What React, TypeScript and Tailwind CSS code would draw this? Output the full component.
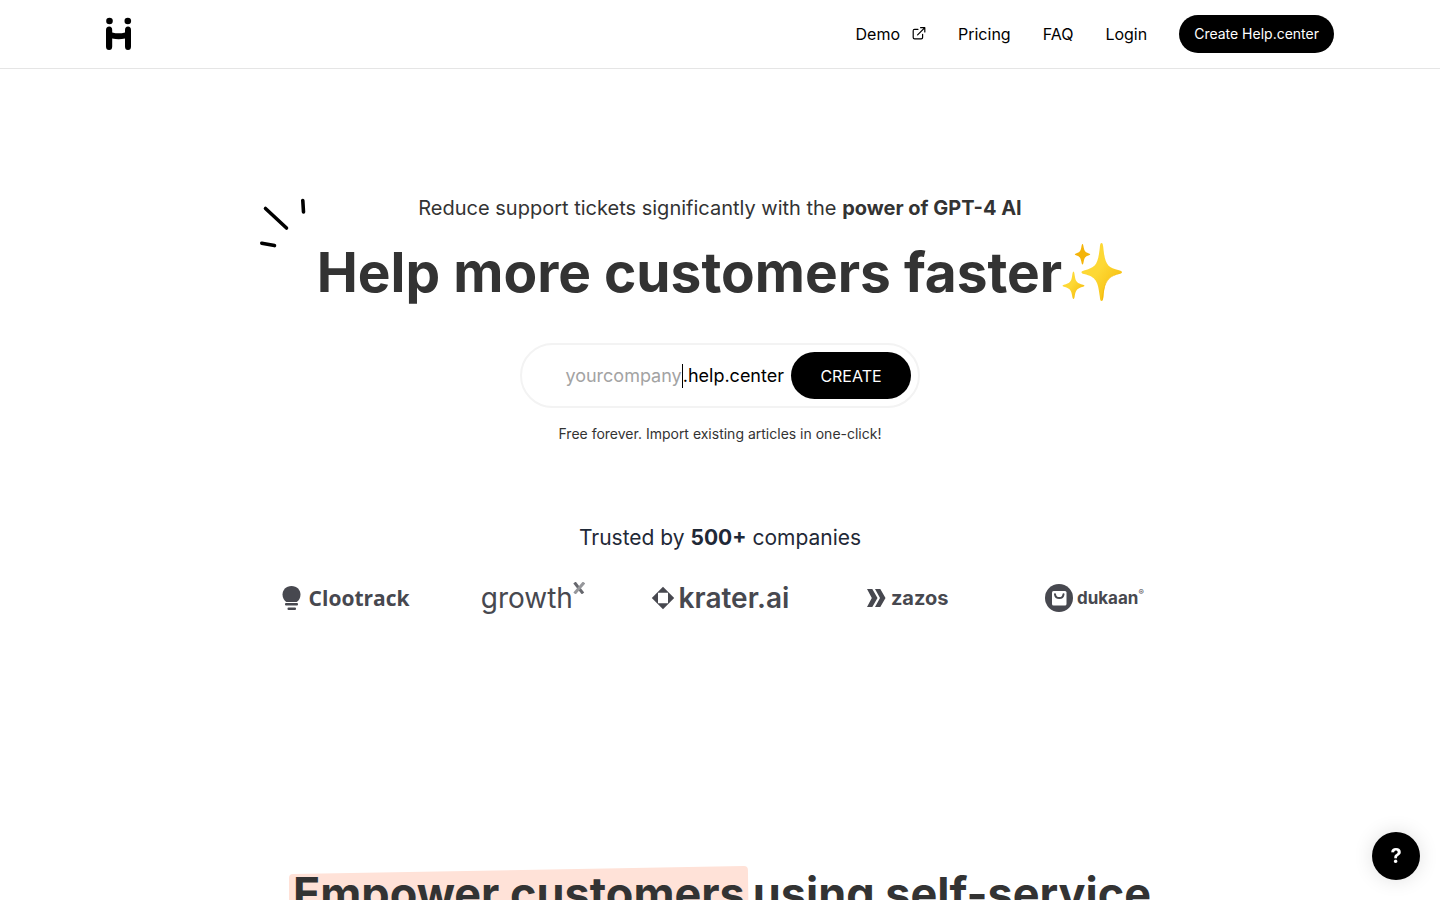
function HelpLogo() {
  return (
    <svg viewBox="0 0 26 34" className="h-[34px] w-[26px]" aria-hidden="true">
      <circle cx="3.5" cy="4" r="3.3" />
      <circle cx="21.8" cy="4" r="3.3" />
      <path d="M0 13Q0 9.5 3.3 9.5Q6.2 9.5 6.2 13V15.4Q12.8 17.2 19 15.4V13Q19 9.5 22 9.5Q25 9.5 25 13V29.5Q25 33 22 33Q19 33 19 29.5V21.4Q12.8 23 6.2 21.4V29.5Q6.2 33 3.1 33Q0 33 0 29.5Z" />
    </svg>
  );
}

function ExternalIcon() {
  return (
    <svg viewBox="0 0 14 14" className="h-[14px] w-[14px]" fill="none" stroke="currentColor" strokeWidth="1.2" strokeLinecap="round" strokeLinejoin="round" aria-hidden="true">
      <path d="M6 2.3H2.6Q1.2 2.3 1.2 3.7V10.5Q1.2 11.9 2.6 11.9H9.2Q10.6 11.9 10.6 10.5V7.3M8.6 .7H12.8V4.9M12.6 .9L5.6 7.9" />
    </svg>
  );
}

function Sparkles() {
  return (
    <svg viewBox="3 0 61 64" className="h-16 w-[61px]" aria-hidden="true">
      <defs>
        <linearGradient id="gold" x1="0" y1="0" x2="1" y2="1">
          <stop offset="0.45" stopColor="#fdd835" />
          <stop offset="1" stopColor="#f4b400" />
        </linearGradient>
      </defs>
      <path fill="url(#gold)" d="M42.5 3C43.7 3 44 5 44.3 7.5C46 24 48 27.5 60 30.3C62.4 30.9 63 31.5 63 32.2C63 33 62 33.4 60 34C48 37 46 41 44.3 56.5C44 59 43.6 61 42.5 61C41.4 61 41 59 40.8 56.5C39 41 37 37 25 34C23 33.4 22.5 33 22.5 32.2C22.5 31.4 23 31 25 30.4C37 27.5 39 24 40.8 7.5C41 5 41.4 3 42.5 3Z" />
      <path fill="#f4b400" d="M62 33.2C50 36 44.8 39 43 60.8C44.2 60 44.3 58 44.5 56C46 42 49 37 60 34Z" opacity="0.8" />
      <path fill="url(#gold)" d="M14.5 31.5C15.3 31.5 15.5 34 15.8 36C16.6 42 18.5 43.3 24 44.7C26 45.2 26 46.2 24 46.7C18.5 48 16.6 50 15.8 55.5C15.5 57.5 15.2 59 14.5 59C13.8 59 13.4 57.5 13.1 55.5C12.3 50 10.5 48 5 46.7C3 46.2 3 45.2 5 44.7C10.5 43.3 12.3 42 13.1 36C13.4 34 13.7 31.5 14.5 31.5Z" />
      <path fill="#f4b40a" d="M23.5 4C24.2 4 24.4 6 24.7 7.5C25.5 11.5 26.5 12.4 30 13.4C31.7 13.9 31.7 14.7 30 15.2C26.5 16.2 25.5 17.5 24.7 21.5C24.4 23 24.2 24.5 23.5 24.5C22.8 24.5 22.6 23 22.3 21.5C21.5 17.5 20.5 16.2 17 15.2C15.3 14.7 15.3 13.9 17 13.4C20.5 12.4 21.5 11.5 22.3 7.5C22.6 6 22.8 4 23.5 4Z" />
    </svg>
  );
}

function Rays() {
  return (
    <svg viewBox="0 0 48 52" className="absolute -top-10 -left-[58px] h-[52px] w-12" fill="none" stroke="#000" strokeWidth="3.6" strokeLinecap="round" aria-hidden="true">
      <path d="M6.5 11.5L27.5 31M43.8 3.5L44.5 15M2.8 46.2L15.5 48.6" />
    </svg>
  );
}

function Clootrack() {
  return (
    <div className="flex items-center gap-2">
      <svg viewBox="0 0 19 26" className="h-[26px] w-[19px]" fill="#47484f" aria-hidden="true">
        <path d="M9.5 1C4 1 .5 5 .5 9.7C.5 13 2.3 15.4 4.3 16.9H14.7C16.9 15.4 18.5 13 18.5 9.7C18.5 5 15 1 9.5 1Z" />
        <rect x="3" y="18" width="13" height="2.5" rx="1" />
        <rect x="5.5" y="22.6" width="8.5" height="2.4" rx="1" />
      </svg>
      <span className="font-['Open_Sans',sans-serif] text-[21px] leading-7 font-bold">Clootrack</span>
    </div>
  );
}

function GrowthX() {
  return (
    <div className="flex items-start">
      <span className="text-[28px] leading-8">growth</span>
      <svg viewBox="0 0 12 12" className="h-3 w-3" fill="none" strokeWidth="3" aria-hidden="true">
        <path d="M1.5 .5L10 11.5" stroke="#66676d" />
        <path d="M11 .5L1.5 11.5" stroke="#96979b" />
      </svg>
    </div>
  );
}

function Krater() {
  return (
    <div className="flex items-center gap-1">
      <svg viewBox="0 0 24 28" className="h-7 w-6" fill="#47484f" aria-hidden="true">
        <path fillRule="evenodd" d="M12 2.8L23.2 14L12 25.3L.8 14ZM7 8.8V19.2H17V8.8Z" />
      </svg>
      <span className="text-[28px] leading-7 font-semibold">krater.ai</span>
    </div>
  );
}

function Zazos() {
  return (
    <div className="flex items-center gap-1">
      <svg viewBox="0 0 21 20" className="h-5 w-[21px]" fill="#47484f" aria-hidden="true">
        <path d="M1 1H6.3L11.5 10L6.3 19H1L5.8 10ZM9 1H14.3L19.5 10L14.3 19H9L14 10Z" />
      </svg>
      <span className="text-xl leading-6 font-bold">zazos</span>
    </div>
  );
}

function Dukaan() {
  return (
    <div className="flex items-center gap-1">
      <svg viewBox="0 0 28 28" className="h-7 w-7" aria-hidden="true">
        <circle cx="14" cy="14" r="14" fill="#47484f" />
        <rect x="7" y="7" width="14.5" height="14.5" rx="1.5" fill="#fff" />
        <path d="M10 10.3Q10.5 14 14.3 14Q18 14 18.5 10.3" fill="none" stroke="#47484f" strokeWidth="2" strokeLinecap="round" />
      </svg>
      <div className="flex items-start">
        <span className="text-[17px] leading-6 font-bold">dukaan</span>
        <span className="text-[8px] leading-3">®</span>
      </div>
    </div>
  );
}

const links = ["Pricing", "FAQ", "Login"];

export default function App() {
  return (
    <div className="min-h-screen bg-white font-['Inter',sans-serif] text-[#333333]">
      <header className="border-b border-[#e5e5e5]">
        <div className="mx-auto flex h-[68px] max-w-[1228px] items-center justify-between text-black">
          <a href="#" aria-label="Help.center"><HelpLogo /></a>
          <nav className="flex items-center gap-8 text-base">
            <a href="#demo" className="flex items-center gap-3">Demo<ExternalIcon /></a>
            {links.map((link) => (
              <a key={link} href={`#${link}`}>{link}</a>
            ))}
            <button className="flex h-[38px] items-center rounded-full bg-black px-[15px] text-sm text-white">Create Help.center</button>
          </nav>
        </div>
      </header>

      <main>
        <section className="flex flex-col items-center pt-[123px]">
          <p className="text-xl leading-8">
            Reduce support tickets significantly with the <strong className="font-bold">power of GPT-4 AI</strong>
          </p>
          <div className="relative mt-[13px] flex items-center">
            <Rays />
            <h1 className="text-[55px] leading-[70px] font-bold">Help more customers faster</h1>
            <Sparkles />
          </div>

          <form className="mt-9 flex h-[65px] w-[400px] items-center rounded-full border-2 border-[#f3f3f3] pr-[7px]">
            <input aria-label="Company name" placeholder="yourcompany" className="w-full min-w-0 flex-1 text-right text-lg outline-none placeholder:text-[#a3a3a3]" />
            <span className="h-6 w-px bg-black" />
            <span className="pr-[7px] text-lg text-black">.help.center</span>
            <button type="button" className="h-[47px] w-[120px] rounded-full bg-black text-base text-white">CREATE</button>
          </form>
          <p className="mt-4 text-sm leading-5">Free forever. Import existing articles in one-click!</p>

          <h2 className="mt-[78px] text-[21px] leading-8 text-[#1f2937]">
            Trusted by <strong className="font-bold">500+</strong> companies
          </h2>
          <div className="mt-7 grid w-full max-w-[936px] grid-cols-5 items-center justify-items-center text-[#47484f]">
            <Clootrack />
            <GrowthX />
            <Krater />
            <Zazos />
            <Dukaan />
          </div>
        </section>

        <section className="mt-60 flex h-20 justify-center">
          <h2 className="flex items-center gap-1 text-[45px] leading-[60px] font-bold">
            <span className="relative isolate px-1">
              <svg viewBox="0 0 464 76" preserveAspectRatio="none" className="absolute inset-x-0 top-0.5 -z-10 h-[76px] w-full" aria-hidden="true">
                <path fill="#ffe2d8" d="M4 8L459 0Q463 0 463 4L464 76H0V12Q0 8 4 8Z" />
              </svg>
              Empower customers
            </span>
            <span>using self-service</span>
          </h2>
        </section>
      </main>

      <button aria-label="Help" className="fixed right-5 bottom-5 flex h-12 w-12 items-center justify-center rounded-full bg-black text-xl font-bold text-white shadow-[0_0_20px_rgba(0,0,0,0.12)]">?</button>
    </div>
  );
}
